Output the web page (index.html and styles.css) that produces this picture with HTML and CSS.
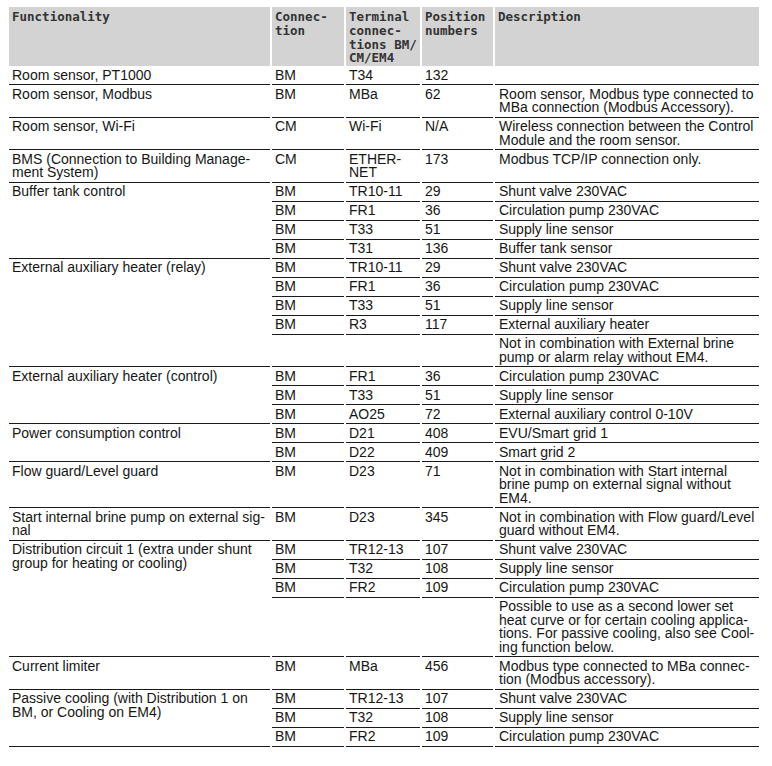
FILE: index.html
```html
<!DOCTYPE html>
<html>
<head>
<meta charset="utf-8">
<link rel="stylesheet" href="styles.css">
</head>
<body>
<table class="spec">
<colgroup>
<col class="c1"><col class="c2"><col class="c3"><col class="c4"><col class="c5">
</colgroup>
<thead>
<tr>
<th>Functionality</th>
<th>Connec-<br>tion</th>
<th>Terminal<br>connec-<br>tions BM/<br>CM/EM4</th>
<th>Position<br>numbers</th>
<th>Description</th>
</tr>
</thead>
<tbody>
<tr class="end"><td>Room sensor, PT1000</td><td>BM</td><td>T34</td><td>132</td><td></td></tr>
<tr class="end"><td>Room sensor, Modbus</td><td>BM</td><td>MBa</td><td>62</td><td>Room sensor, Modbus type connected to<br>MBa connection (Modbus Accessory).</td></tr>
<tr class="end"><td>Room sensor, Wi-Fi</td><td>CM</td><td>Wi-Fi</td><td>N/A</td><td>Wireless connection between the Control<br>Module and the room sensor.</td></tr>
<tr class="end"><td>BMS (Connection to Building Manage-<br>ment System)</td><td>CM</td><td>ETHER-<br>NET</td><td>173</td><td>Modbus TCP/IP connection only.</td></tr>

<tr><td rowspan="4" class="grp">Buffer tank control</td><td>BM</td><td>TR10-11</td><td>29</td><td>Shunt valve 230VAC</td></tr>
<tr><td>BM</td><td>FR1</td><td>36</td><td>Circulation pump 230VAC</td></tr>
<tr><td>BM</td><td>T33</td><td>51</td><td>Supply line sensor</td></tr>
<tr><td>BM</td><td>T31</td><td>136</td><td>Buffer tank sensor</td></tr>

<tr><td rowspan="5" class="grp">External auxiliary heater (relay)</td><td>BM</td><td>TR10-11</td><td>29</td><td>Shunt valve 230VAC</td></tr>
<tr><td>BM</td><td>FR1</td><td>36</td><td>Circulation pump 230VAC</td></tr>
<tr><td>BM</td><td>T33</td><td>51</td><td>Supply line sensor</td></tr>
<tr><td>BM</td><td>R3</td><td>117</td><td>External auxiliary heater</td></tr>
<tr><td></td><td></td><td></td><td>Not in combination with External brine<br>pump or alarm relay without EM4.</td></tr>

<tr><td rowspan="3" class="grp">External auxiliary heater (control)</td><td>BM</td><td>FR1</td><td>36</td><td>Circulation pump 230VAC</td></tr>
<tr><td>BM</td><td>T33</td><td>51</td><td>Supply line sensor</td></tr>
<tr><td>BM</td><td>AO25</td><td>72</td><td>External auxiliary control 0-10V</td></tr>

<tr><td rowspan="2" class="grp">Power consumption control</td><td>BM</td><td>D21</td><td>408</td><td>EVU/Smart grid 1</td></tr>
<tr><td>BM</td><td>D22</td><td>409</td><td>Smart grid 2</td></tr>

<tr class="end"><td>Flow guard/Level guard</td><td>BM</td><td>D23</td><td>71</td><td>Not in combination with Start internal<br>brine pump on external signal without<br>EM4.</td></tr>
<tr class="end"><td>Start internal brine pump on external sig-<br>nal</td><td>BM</td><td>D23</td><td>345</td><td>Not in combination with Flow guard/Level<br>guard without EM4.</td></tr>

<tr><td rowspan="4" class="grp">Distribution circuit 1 (extra under shunt<br>group for heating or cooling)</td><td>BM</td><td>TR12-13</td><td>107</td><td>Shunt valve 230VAC</td></tr>
<tr><td>BM</td><td>T32</td><td>108</td><td>Supply line sensor</td></tr>
<tr><td>BM</td><td>FR2</td><td>109</td><td>Circulation pump 230VAC</td></tr>
<tr><td></td><td></td><td></td><td>Possible to use as a second lower set<br>heat curve or for certain cooling applica-<br>tions. For passive cooling, also see Cool-<br>ing function below.</td></tr>

<tr class="end"><td>Current limiter</td><td>BM</td><td>MBa</td><td>456</td><td>Modbus type connected to MBa connec-<br>tion (Modbus accessory).</td></tr>

<tr><td rowspan="3" class="grp">Passive cooling (with Distribution 1 on<br>BM, or Cooling on EM4)</td><td>BM</td><td>TR12-13</td><td>107</td><td>Shunt valve 230VAC</td></tr>
<tr><td>BM</td><td>T32</td><td>108</td><td>Supply line sensor</td></tr>
<tr><td>BM</td><td>FR2</td><td>109</td><td>Circulation pump 230VAC</td></tr>
</tbody>
</table>
</body>
</html>
```
FILE: styles.css
```css
html, body {
  margin: 0;
  padding: 0;
  background: #ffffff;
}
body {
  padding: 7px 0 0 7px;
}
.spec {
  border-collapse: separate;
  border-spacing: 2px 0;
  table-layout: fixed;
  width: 754px;
  font-family: "Liberation Sans", Arial, sans-serif;
  font-size: 14px;
  color: #161616;
}
.c1 { width: 261px; }
.c2 { width: 72px; }
.c3 { width: 74px; }
.c4 { width: 71px; }
.c5 { width: 264px; }
.spec th {
  box-sizing: border-box;
  background: #d3d3d3;
  color: #333333;
  font-family: "DejaVu Sans Mono", monospace;
  font-weight: bold;
  font-size: 12.5px;
  line-height: 13.8px;
  text-align: left;
  vertical-align: top;
  padding: 3px 3px 0 3px;
  height: 59px;
}
.spec td {
  box-sizing: border-box;
  vertical-align: top;
  text-align: left;
  line-height: 13.5px;
  padding: 2.5px 3px 2px 3px;
  border-bottom: 1px solid #1a1a1a;
}
.spec td:last-child {
  padding-left: 4px;
}
```
